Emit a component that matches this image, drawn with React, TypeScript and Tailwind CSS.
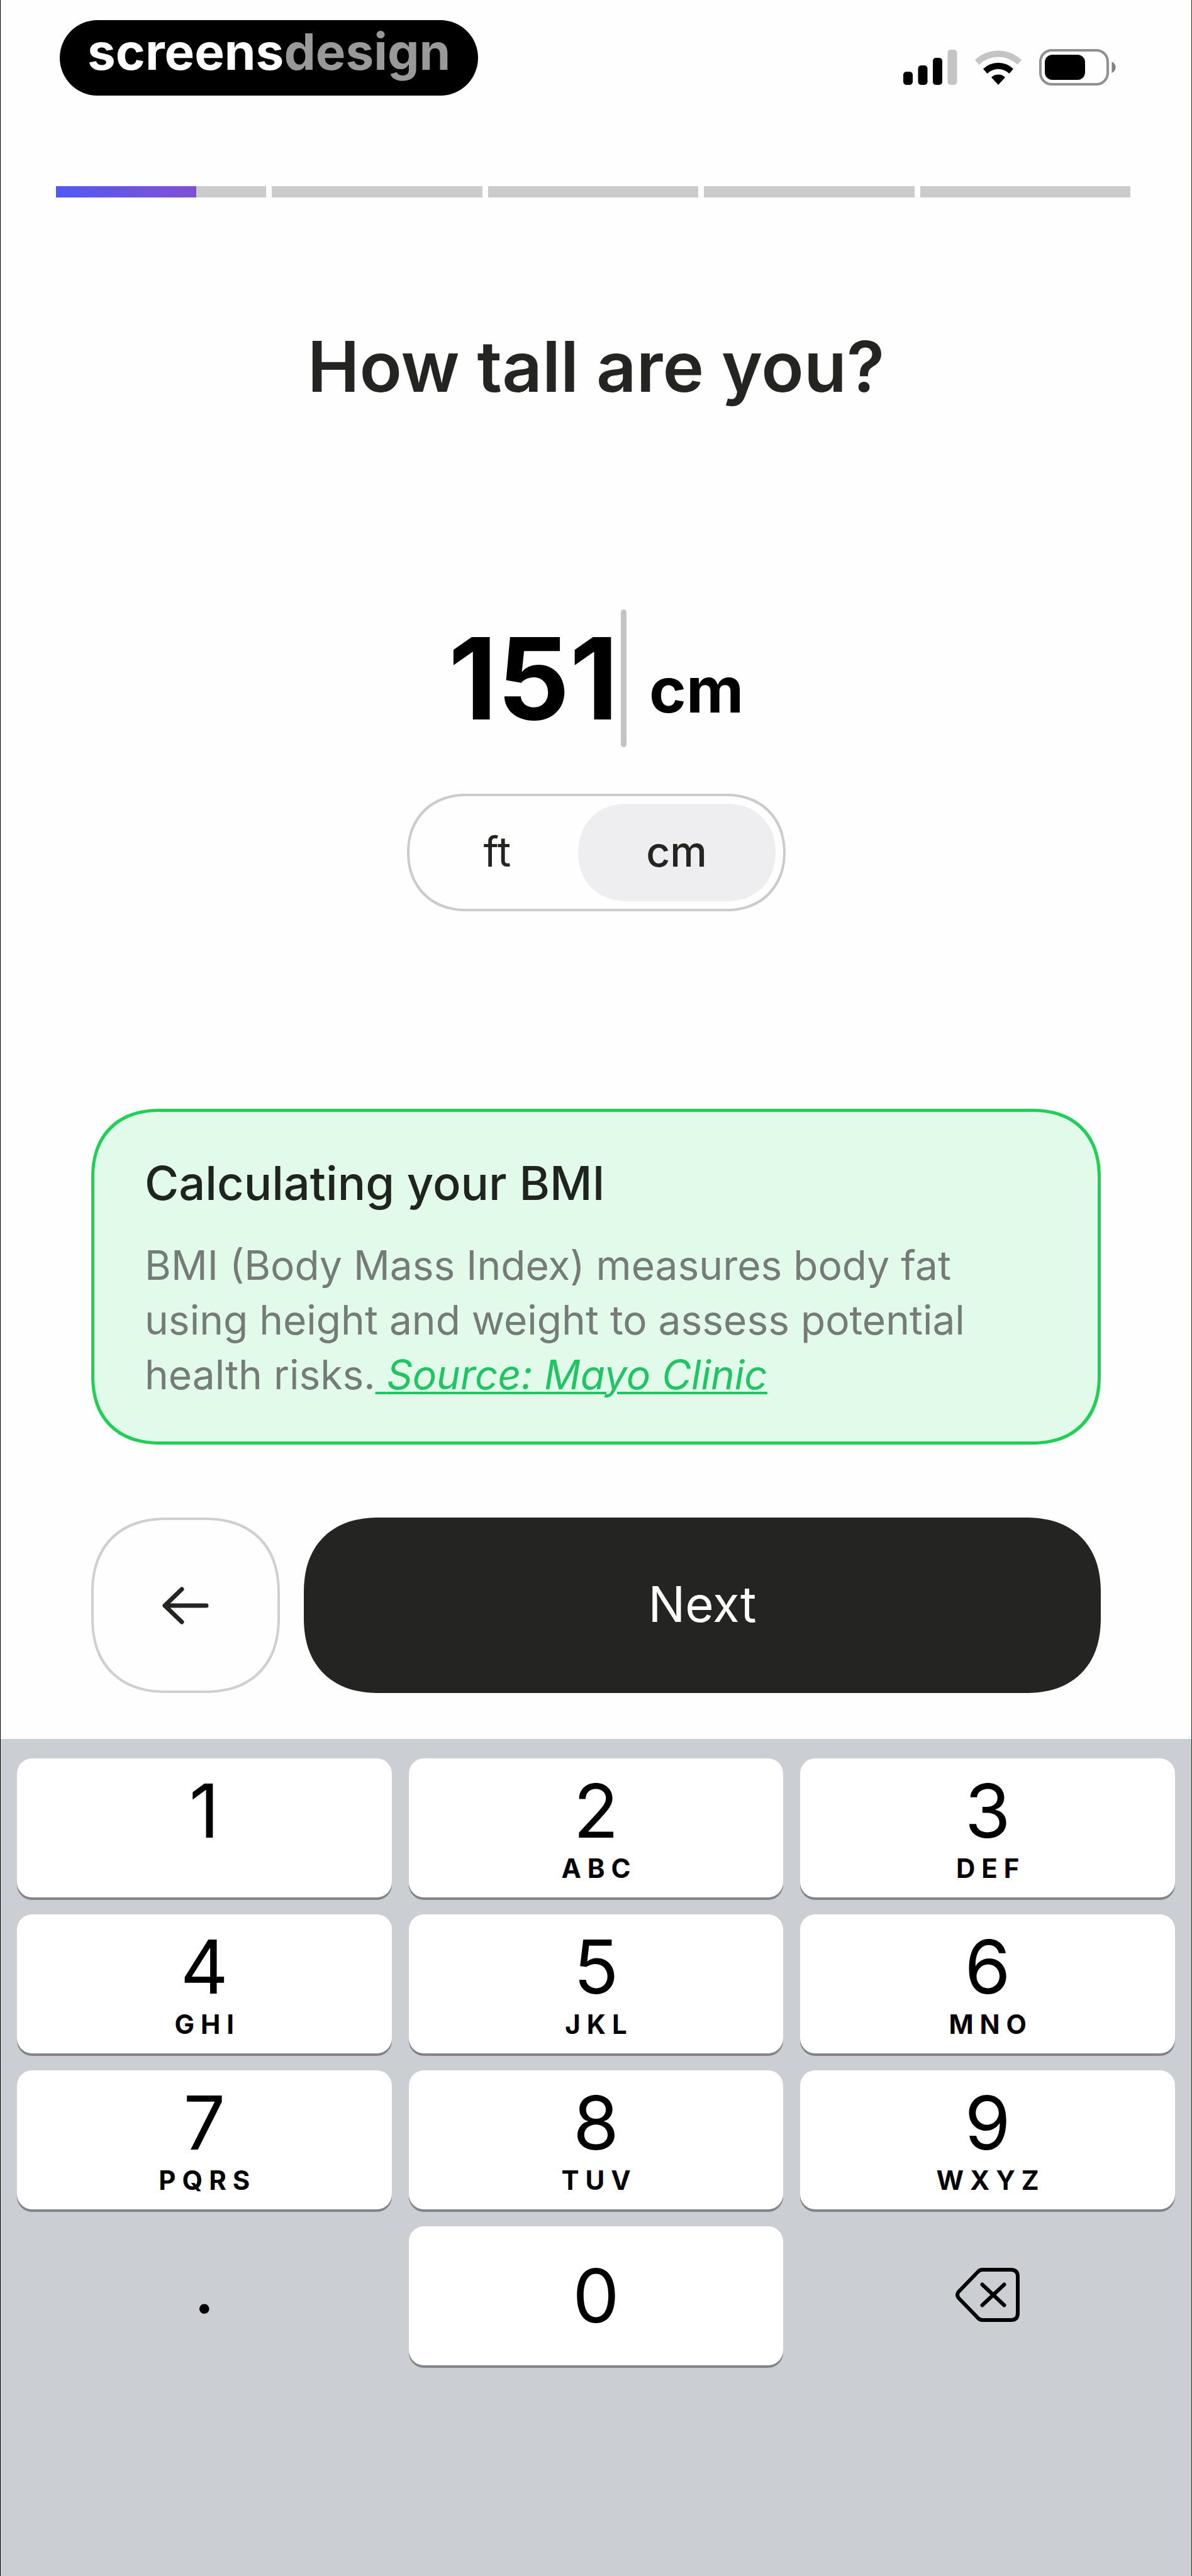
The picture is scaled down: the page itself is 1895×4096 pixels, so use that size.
import { useState } from 'react'
import { clsx } from 'clsx'

type Unit = 'ft' | 'cm'

const SEGMENTS = [66.6, 0, 0, 0, 0]

const KEYS = [
  { digit: '1', letters: '' },
  { digit: '2', letters: 'ABC' },
  { digit: '3', letters: 'DEF' },
  { digit: '4', letters: 'GHI' },
  { digit: '5', letters: 'JKL' },
  { digit: '6', letters: 'MNO' },
  { digit: '7', letters: 'PQRS' },
  { digit: '8', letters: 'TUV' },
  { digit: '9', letters: 'WXYZ' },
]

function SignalIcon() {
  return (
    <svg width="86" height="56" viewBox="0 0 86 56" aria-hidden="true">
      <rect x="0" y="35" width="15" height="21" rx="5" />
      <rect x="23.5" y="25" width="15" height="31" rx="5" />
      <rect x="47" y="13" width="15" height="43" rx="5" />
      <rect x="70.5" y="0" width="15" height="56" rx="5" fill="#c4c4c4" />
    </svg>
  )
}

function WifiIcon() {
  return (
    <svg width="74" height="56" viewBox="0 0 74 56" aria-hidden="true">
      <path d="M0 16.5a53 53 0 0 1 74 0l-6.5 7.5a43.5 43.5 0 0 0-61 0z" fill="#c4c4c4" />
      <path d="M13 30.5a34.5 34.5 0 0 1 48 0l-6.5 7.5a25 25 0 0 0-35 0z" />
      <path d="M26 44a16 16 0 0 1 22 0L37 56z" />
    </svg>
  )
}

function BatteryIcon() {
  return (
    <svg width="122" height="58" viewBox="0 0 122 58" aria-hidden="true">
      <rect x="2" y="2" width="107" height="54" rx="18" fill="none" stroke="#909090" strokeWidth="4" />
      <rect x="9" y="9" width="64" height="40" rx="12" />
      <path d="M115.5 20c3.5 1.5 6 5 6 9s-2.5 7.5-6 9z" fill="#808080" />
    </svg>
  )
}

function ArrowLeftIcon() {
  return (
    <svg width="74" height="60" viewBox="0 0 74 60" fill="none" stroke="#242422" strokeWidth="7" strokeLinecap="round" strokeLinejoin="round" aria-hidden="true">
      <path d="M70 30H4M31 4 4 30l27 26" />
    </svg>
  )
}

function BackspaceIcon() {
  return (
    <svg width="102" height="86" viewBox="0 0 102 86" fill="none" stroke="#000" strokeWidth="6" strokeLinecap="round" strokeLinejoin="round" aria-hidden="true">
      <path d="M43 3H88q11 0 11 11V72q0 11-11 11H43q-5 0-8-4L5 48q-4-5 0-10L35 7q3-4 8-4z" />
      <path d="M42.5 26.5l35 33M77.5 26.5l-35 33" />
    </svg>
  )
}

function StatusBar() {
  return (
    <header className="flex items-end justify-between pt-8 pr-[120px] pl-[94px]">
      <div className="flex h-[120px] items-center rounded-[60px] bg-black px-11 pb-5">
        <span className="text-[80px] leading-none font-bold text-white">
          screens<span className="text-[#999999]">design</span>
        </span>
      </div>
      <div className="flex items-center gap-7 pb-4">
        <SignalIcon />
        <WifiIcon />
        <BatteryIcon />
      </div>
    </header>
  )
}

function ProgressBar() {
  return (
    <div className="mt-36 mr-[97px] ml-[88px] flex gap-[9px]">
      {SEGMENTS.map((value, i) => (
        <div key={i} className="h-[18px] flex-1 bg-[#cacbcd]">
          <div className="h-full bg-linear-to-r from-[#5057f5] to-[#8050d5]" style={{ width: `${value}%` }} />
        </div>
      ))}
    </div>
  )
}

function UnitToggle({ unit, onChange }: { unit: Unit; onChange: (u: Unit) => void }) {
  return (
    <div role="group" aria-label="Unit" className="mt-[74px] flex h-[187px] rounded-[110px] border-4 border-[#cbcbcb] p-3 [corner-shape:superellipse(1.1)]">
      {(['ft', 'cm'] as const).map((u) => (
        <button
          key={u}
          type="button"
          aria-pressed={unit === u}
          onClick={() => onChange(u)}
          className={clsx(
            'rounded-[90px] pb-1 text-[66px] leading-none text-[#242422] [corner-shape:superellipse(1.1)]',
            unit === u ? 'w-[314px] bg-[#eeeef0] font-medium' : 'w-64 font-normal',
          )}
        >
          {u}
        </button>
      ))}
    </div>
  )
}

function BmiCard() {
  return (
    <section className="mt-[314px] rounded-[110px] border-[5px] border-[#20d054] bg-[#e2fae9] px-20 pt-[73px] pb-[63px] [corner-shape:superellipse(1.2)]">
      <h2 className="text-[74px] leading-[80px] font-medium text-[#20241f]">Calculating your BMI</h2>
      <p className="mt-[47px] text-[64px] leading-[87px] text-[#757b76]">
        BMI (Body Mass Index) measures body fat using height and weight to assess potential health risks.
        <a href="#source" className="text-[#1fc563] italic underline decoration-4 underline-offset-4">
          {' '}
          Source: Mayo Clinic
        </a>
      </p>
    </section>
  )
}

function Keypad({ onDigit, onDelete }: { onDigit: (d: string) => void; onDelete: () => void }) {
  const key =
    'flex h-[221px] flex-col items-center justify-center gap-3 rounded-[24px] bg-white pb-0.5 text-[118px] leading-none shadow-[0_4px_0_#808388]'

  return (
    <div className="mt-[73px] grid flex-1 grid-cols-3 content-start gap-[27px] bg-[#cbced3] px-[26px] pt-[31px] pb-20 text-black">
      {KEYS.map(({ digit, letters }) => (
        <button key={digit} type="button" className={key} onClick={() => onDigit(digit)}>
          <span>{digit}</span>
          <span className="h-[42px] pl-2.5 text-[42px] leading-none font-bold tracking-[10px]">{letters}</span>
        </button>
      ))}
      <button type="button" className="flex h-[221px] items-center justify-center pb-8 text-[118px] leading-none" onClick={() => onDigit('.')}>
        .
      </button>
      <button type="button" className={key} onClick={() => onDigit('0')}>
        0
      </button>
      <button type="button" aria-label="Delete" className="flex h-[221px] items-center justify-center pb-1" onClick={onDelete}>
        <BackspaceIcon />
      </button>
    </div>
  )
}

export default function App() {
  const [height, setHeight] = useState('151')
  const [unit, setUnit] = useState<Unit>('cm')

  return (
    <div className="flex min-h-screen flex-col border-r border-l border-r-[#0c3a0c] border-l-black bg-[#fefefe] font-[Inter,sans-serif]">
      <StatusBar />
      <ProgressBar />

      <main className="flex flex-col px-36">
        <h1 className="mt-[209px] text-center text-[111px] leading-[120px] font-semibold text-[#242422]">How tall are you?</h1>

        <div className="mt-[326px] flex flex-col items-center">
          <div className="flex h-[219px] items-center">
            <input
              aria-label="Height"
              inputMode="decimal"
              value={height}
              onChange={(e) => setHeight(e.target.value)}
              className="field-sizing-content h-[219px] bg-transparent text-right text-[180px] leading-none font-bold text-black outline-none"
            />
            <div className="ml-1 h-[219px] w-[9px] rounded-full bg-[#c4c4c4]" />
            <span className="pt-9 pl-9 text-[100px] leading-none font-bold text-black">{unit}</span>
          </div>
          <UnitToggle unit={unit} onChange={setUnit} />
        </div>

        <BmiCard />

        <div className="mt-[116px] flex h-[279px] gap-[38px]">
          <button type="button" aria-label="Back" className="flex w-[300px] items-center justify-center rounded-[120px] border-4 border-[#cfcfcf] [corner-shape:superellipse(1.2)]">
            <ArrowLeftIcon />
          </button>
          <button type="button" className="flex-1 rounded-[120px] bg-[#242422] pb-1 text-[78px] leading-none text-white [corner-shape:superellipse(1.2)]">
            Next
          </button>
        </div>
      </main>

      <Keypad onDigit={(d) => setHeight((h) => h + d)} onDelete={() => setHeight((h) => h.slice(0, -1))} />
    </div>
  )
}
